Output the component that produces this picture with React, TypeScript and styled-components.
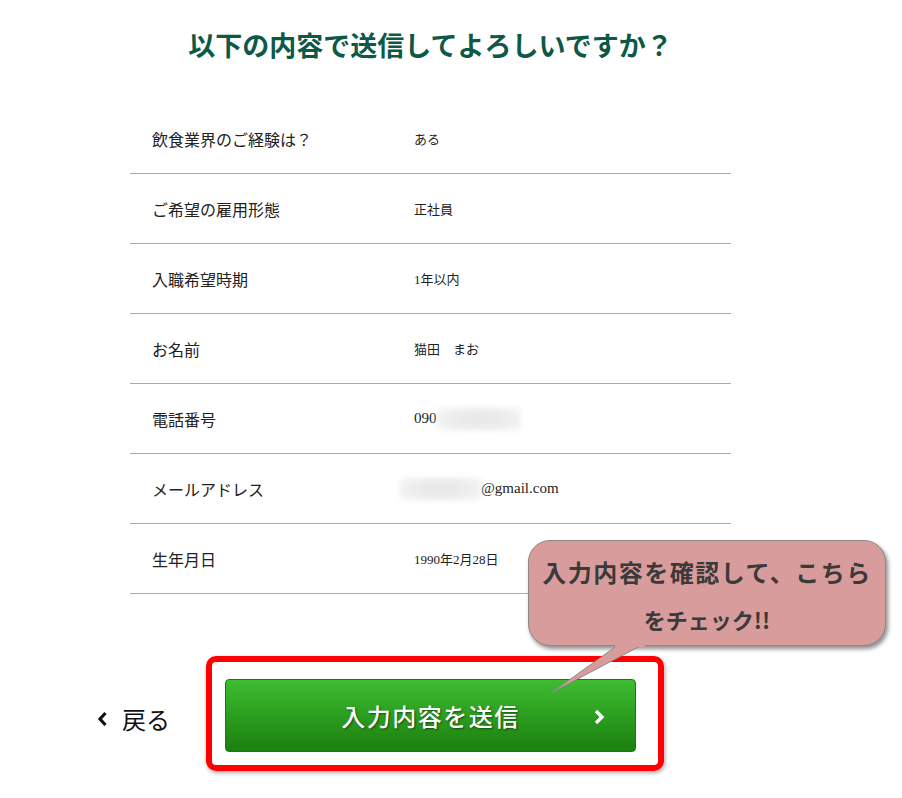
import React from "react";
import styled, { createGlobalStyle } from "styled-components";

interface Item {
  label: string;
  value: React.ReactNode;
  big?: boolean;
}

const GlobalStyle = createGlobalStyle`
  body {
    margin: 0;
    background: #fff;
    font-family: "Liberation Serif", "Noto Sans CJK JP", serif;
    color: #222;
  }
`;

function getItems(): Item[] {
  return [
    { label: "飲食業界のご経験は？", value: "ある" },
    { label: "ご希望の雇用形態", value: "正社員" },
    { label: "入職希望時期", value: "1年以内" },
    { label: "お名前", value: "猫田　まお" },
    {
      label: "電話番号",
      big: true,
      value: (
        <>
          090
          <Blur $w={84} />
        </>
      ),
    },
    {
      label: "メールアドレス",
      big: true,
      value: (
        <>
          <Blur $w={81} $shift={-14} />
          @gmail.com
        </>
      ),
    },
    { label: "生年月日", value: "1990年2月28日" },
  ];
}

export default function App() {
  const items = getItems();
  return (
    <Page>
      <GlobalStyle />
      <Title>以下の内容で送信してよろしいですか？</Title>
      <List>
        {items.map((item) => (
          <Row key={item.label}>
            <Label>{item.label}</Label>
            <Value $big={item.big}>{item.value}</Value>
          </Row>
        ))}
      </List>
      <Actions>
        <Back>
          <svg width="11" height="16" viewBox="0 0 11 16">
            <path d="M8.5 2 L3 8 L8.5 14" fill="none" stroke="#111" strokeWidth="3.2" />
          </svg>
          戻る
        </Back>
        <Highlight>
          <Submit>
            <span>入力内容を送信</span>
            <Chevron width="12" height="18" viewBox="0 0 12 18">
              <path d="M3 3 L9 9 L3 15" fill="none" stroke="#fff" strokeWidth="3.4" />
            </Chevron>
          </Submit>
        </Highlight>
      </Actions>
      <Callout>
        入力内容を確認して、こちら
        <br />
        <Small>をチェック!!</Small>
        <Tail width="96" height="52" viewBox="0 0 96 52">
          <path d="M69 0 L2 48 L93 0" fill="#d99c9c" stroke="#8a8a8a" strokeWidth="1" />
          <rect x="66" y="0" width="30" height="2" fill="#d99c9c" />
        </Tail>
      </Callout>
    </Page>
  );
}

const Page = styled.div`
  position: relative;
  width: 902px;
  height: 798px;
  overflow: hidden;
`;

const Title = styled.h1`
  margin: 28px 0 0;
  width: 861px;
  text-align: center;
  font-size: 27px;
  line-height: 39px;
  letter-spacing: 0;
  font-weight: 700;
  color: #0d5946;
`;

const List = styled.ul`
  list-style: none;
  margin: 37px 0 0 130px;
  padding: 0;
  width: 601px;
`;

const Row = styled.li`
  display: grid;
  grid-template-columns: 284px 1fr;
  align-items: center;
  height: 69px;
  border-bottom: 1px solid #aaa;
`;

const Label = styled.div`
  padding-left: 22px;
  font-size: 16px;
  color: #222;
`;

const Value = styled.div<{ $big?: boolean }>`
  display: flex;
  align-items: center;
  font-size: ${(p) => (p.$big ? "15px" : "13px")};
  color: #222;
`;

const Blur = styled.span<{ $w: number; $shift?: number }>`
  display: inline-block;
  width: ${(p) => p.$w}px;
  height: 24px;
  margin-left: ${(p) => p.$shift ?? 0}px;
  background: radial-gradient(ellipse at center, #e6e6e6 0%, #eeeeee 55%, #fafafa 100%);
  filter: blur(2px);
`;

const Actions = styled.div`
  display: flex;
  align-items: center;
  gap: 36px;
  margin: 62px 0 0 97px;
`;

const Back = styled.a`
  display: flex;
  align-items: center;
  gap: 14px;
  margin-top: 10px;
  font-size: 24px;
  color: #111;
  cursor: pointer;
`;

const Highlight = styled.div`
  border: 6px solid #f00;
  border-radius: 10px;
  padding: 17px 22px 13px 13px;
  box-shadow: 1px 2px 4px rgba(0, 0, 0, 0.35);
`;

const Submit = styled.button`
  position: relative;
  display: flex;
  align-items: center;
  justify-content: center;
  width: 411px;
  height: 73px;
  border: 1px solid #177a0c;
  border-radius: 4px;
  background: linear-gradient(#3dbd30, #1b7f0f);
  color: #fff;
  font-family: "Liberation Serif", "Noto Sans CJK JP", serif;
  font-size: 24px;
  font-weight: 500;
  letter-spacing: 1.5px;
  text-shadow: 1px 1px 2px rgba(0, 0, 0, 0.5);
  cursor: pointer;
`;

const Chevron = styled.svg`
  position: absolute;
  right: 30px;
  top: 28px;
`;

const Callout = styled.div`
  position: absolute;
  left: 528px;
  top: 540px;
  width: 358px;
  height: 106px;
  box-sizing: border-box;
  padding-top: 7px;
  background: #d99c9c;
  border: 1px solid #8a8a8a;
  border-radius: 22px;
  box-shadow: 2px 3px 4px rgba(0, 0, 0, 0.45);
  font-family: "Noto Sans CJK JP", sans-serif;
  font-weight: 700;
  font-size: 24px;
  line-height: 47px;
  letter-spacing: 1.5px;
  text-align: center;
  color: #3a3a3a;
`;

const Small = styled.span`
  font-size: 22px;
  font-weight: 700;
  letter-spacing: 0;
`;

const Tail = styled.svg`
  position: absolute;
  left: 20px;
  top: 104px;
  overflow: visible;
`;
